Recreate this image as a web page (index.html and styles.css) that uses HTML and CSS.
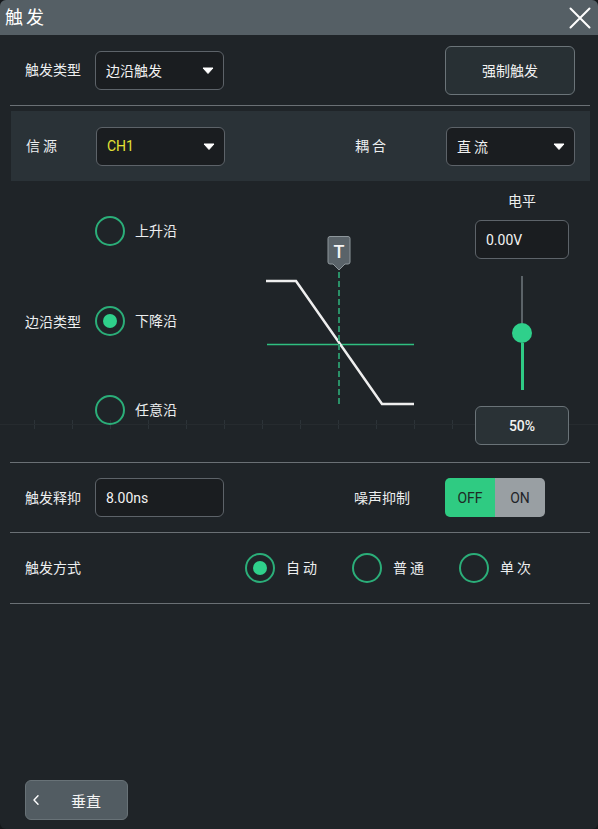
FILE: index.html
```html
<!DOCTYPE html>
<html lang="zh-CN">
<head>
<meta charset="utf-8">
<title>触发</title>
<link rel="stylesheet" href="styles.css">
</head>
<body>
<div class="dialog">
  <header class="titlebar">
    <h1 class="title">触发</h1>
    <button class="close" aria-label="关闭">
      <svg width="22" height="22" viewBox="0 0 22 22"><path d="M1.5 1.5 L20.5 20.5 M20.5 1.5 L1.5 20.5" stroke="#fff" stroke-width="2" stroke-linecap="round"/></svg>
    </button>
  </header>

  <section class="row row-type">
    <span class="label">触发类型</span>
    <div class="select select-type">
      <span>边沿触发</span>
      <svg class="caret" width="12" height="7" viewBox="0 0 12 7"><path d="M1 1 H11 L6 6.5 Z" fill="#fff" stroke="#fff" stroke-width="1" stroke-linejoin="round"/></svg>
    </div>
    <button class="force">强制触发</button>
  </section>
  <div class="divider"></div>

  <section class="panel">
    <span class="label spaced">信源</span>
    <div class="select select-src">
      <span class="ch1">CH1</span>
      <svg class="caret" width="12" height="7" viewBox="0 0 12 7"><path d="M1 1 H11 L6 6.5 Z" fill="#fff" stroke="#fff" stroke-width="1" stroke-linejoin="round"/></svg>
    </div>
    <span class="label spaced couple">耦合</span>
    <div class="select">
      <span class="spaced">直流</span>
      <svg class="caret" width="12" height="7" viewBox="0 0 12 7"><path d="M1 1 H11 L6 6.5 Z" fill="#fff" stroke="#fff" stroke-width="1" stroke-linejoin="round"/></svg>
    </div>
  </section>

  <section class="edge">
    <span class="label edge-label">边沿类型</span>
    <div class="radio-col">
      <div class="radio"><span class="ring"></span><span class="label">上升沿</span></div>
      <div class="radio"><span class="ring on"></span><span class="label">下降沿</span></div>
      <div class="radio"><span class="ring"></span><span class="label">任意沿</span></div>
    </div>
    <svg class="diagram" width="180" height="281" viewBox="0 0 180 281">
      <line x1="17" y1="163.5" x2="164" y2="163.5" stroke="#2fbf80" stroke-width="1.5"/>
      <polyline points="16,100 46,100 132,223 164,223" fill="none" stroke="#eeeeee" stroke-width="2.5"/>
      <line x1="89" y1="91" x2="89" y2="225" stroke="#2a9068" stroke-width="2" stroke-dasharray="6 3"/>
      <path d="M80 55.5 h18 a2 2 0 0 1 2 2 v23.5 a2 2 0 0 1 -2 2 h-3 l-6 6 l-6 -6 h-3 a2 2 0 0 1 -2 -2 v-23.5 a2 2 0 0 1 2 -2 z" fill="#5a6369" stroke="#8e979c" stroke-width="1"/>
      <text x="89" y="77" text-anchor="middle" font-size="18" font-weight="500" fill="#f4f4f4" font-family="Roboto, sans-serif">T</text>
    </svg>
    <div class="level">
      <span class="level-title">电平</span>
      <div class="field level-input">0.00V</div>
      <div class="slider">
        <span class="track track-top"></span>
        <span class="knob"></span>
        <span class="track track-bottom"></span>
      </div>
      <button class="pct">50%</button>
    </div>
  </section>
  <div class="divider"></div>

  <section class="row row-holdoff">
    <span class="label">触发释抑</span>
    <div class="field holdoff">8.00ns</div>
    <span class="label noise">噪声抑制</span>
    <div class="toggle">
      <span class="toggle-off">OFF</span>
      <span class="toggle-on">ON</span>
    </div>
  </section>
  <div class="divider"></div>

  <section class="row row-mode">
    <span class="label">触发方式</span>
    <div class="mode-group">
      <div class="radio radio-mode"><span class="ring on"></span><span class="label spaced">自动</span></div>
      <div class="radio radio-mode"><span class="ring"></span><span class="label spaced">普通</span></div>
      <div class="radio radio-mode"><span class="ring"></span><span class="label spaced">单次</span></div>
    </div>
  </section>
  <div class="divider"></div>

  <footer class="footer">
    <button class="back">
      <svg width="6" height="10" viewBox="0 0 6 10"><path d="M5 0.8 L1 5 L5 9.2" fill="none" stroke="#fff" stroke-width="1.4" stroke-linecap="round" stroke-linejoin="round"/></svg>
      <span class="back-text">垂直</span>
    </button>
  </footer>
</div>
</body>
</html>
```

FILE: styles.css
```css
* {
  box-sizing: border-box;
  margin: 0;
  padding: 0;
}

html,
body {
  width: 598px;
  height: 829px;
  background: #15181b;
  overflow: hidden;
}

body {
  font-family: Roboto, "Noto Sans CJK SC", sans-serif;
  color: #eceeef;
  font-size: 14px;
}

button {
  font-family: inherit;
  color: inherit;
  cursor: pointer;
}

.dialog {
  height: 829px;
  display: flex;
  flex-direction: column;
  background: #1f2428;
  border-radius: 6px;
  overflow: hidden;
}

.titlebar {
  height: 35px;
  flex: none;
  background: #555f65;
  display: flex;
  align-items: center;
  justify-content: space-between;
  padding: 0 7px 0 5px;
}

.title {
  font-size: 18px;
  font-weight: 400;
  letter-spacing: 3px;
  line-height: 1;
  color: #ffffff;
}

.close {
  background: none;
  border: 0;
  width: 22px;
  height: 22px;
  display: flex;
}

.row {
  height: 70px;
  flex: none;
  display: flex;
  align-items: center;
  padding: 0 23px 0 25px;
}

.label {
  font-size: 14px;
  line-height: 20px;
  white-space: nowrap;
  color: #eceeef;
}

.spaced {
  letter-spacing: 3px;
}

.select {
  width: 129px;
  height: 39px;
  flex: none;
  display: flex;
  align-items: center;
  justify-content: space-between;
  padding: 0 9px 0 10px;
  background: #1a1d20;
  border: 1px solid #5d6369;
  border-radius: 6px;
  font-size: 14px;
  color: #f2f2f2;
}

.caret {
  display: block;
}

.select-type {
  margin-left: 14px;
}

.force {
  margin-left: auto;
  width: 130px;
  height: 49px;
  background: #283034;
  border: 1px solid #6b7479;
  border-radius: 6px;
  font-size: 14px;
  color: #f2f2f2;
}

.divider {
  height: 1px;
  flex: none;
  background: #6a7075;
  margin: 0 8px 0 10px;
}

.panel {
  height: 70px;
  flex: none;
  margin: 5px 8px 0 11px;
  background: #2a3237;
  display: flex;
  align-items: center;
  padding: 0 15px;
}

.select-src {
  margin-left: 36px;
}

.ch1 {
  color: #e3e335;
}

.couple {
  margin-left: auto;
  margin-right: 57px;
}

.edge {
  height: 281px;
  flex: none;
  display: flex;
  padding-left: 25px;
  background:
    linear-gradient(#262b2f, #262b2f) 0 243px / 100% 1px no-repeat,
    repeating-linear-gradient(90deg, #2c3338 0 1px, transparent 1px 38px) 34px 239px / 600px 9px no-repeat;
}

.edge-label {
  width: 70px;
  flex: none;
  align-self: center;
}

.radio-col {
  width: 155px;
  flex: none;
  display: flex;
  flex-direction: column;
  padding-top: 35px;
  gap: 59.5px;
}

.radio {
  display: flex;
  align-items: center;
  gap: 10px;
  height: 30px;
}

.ring {
  width: 30px;
  height: 30px;
  flex: none;
  border-radius: 50%;
  border: 2.5px solid #2bae79;
  display: flex;
  align-items: center;
  justify-content: center;
}

.ring.on::after {
  content: "";
  width: 14px;
  height: 14px;
  border-radius: 50%;
  background: #2fd08b;
}

.diagram {
  flex: none;
  display: block;
}

.level {
  width: 94px;
  flex: none;
  margin-left: 45px;
  display: flex;
  flex-direction: column;
  align-items: center;
  padding-top: 10px;
}

.level-title {
  font-size: 14px;
  line-height: 20px;
  margin-bottom: 9px;
}

.field {
  height: 39px;
  display: flex;
  align-items: center;
  padding-left: 10px;
  background: #1a1d20;
  border: 1px solid #5d6369;
  border-radius: 6px;
  font-size: 14px;
  color: #f2f2f2;
}

.level-input {
  width: 94px;
}

.slider {
  height: 147px;
  display: flex;
  flex-direction: column;
  align-items: center;
  padding-top: 17px;
}

.track {
  display: block;
  height: 47px;
}

.track-top {
  width: 2px;
  background: #5b6368;
}

.track-bottom {
  width: 3px;
  background: #2fcb85;
}

.knob {
  width: 20px;
  height: 20px;
  border-radius: 50%;
  background: #2fd08b;
}

.pct {
  width: 94px;
  height: 39px;
  background: #2a3236;
  border: 1px solid #6a7378;
  border-radius: 6px;
  font-size: 14px;
  font-weight: 500;
  color: #f2f2f2;
}

.row-holdoff {
  height: 69px;
  padding-right: 53px;
}

.holdoff {
  width: 129px;
  margin-left: 14px;
}

.noise {
  margin-left: auto;
}

.toggle {
  margin-left: 35px;
  width: 100px;
  height: 39px;
  display: flex;
  border-radius: 5px;
  overflow: hidden;
  font-size: 14px;
}

.toggle-off,
.toggle-on {
  flex: 1;
  display: flex;
  align-items: center;
  justify-content: center;
  color: #1e2a25;
}

.toggle-off {
  background: #2fcb82;
}

.toggle-on {
  background: #999fa3;
  color: #1f2428;
}

.mode-group {
  display: flex;
  gap: 32px;
  margin-left: 164px;
}

.radio-mode {
  gap: 11px;
}

.footer {
  margin-top: auto;
  padding: 0 0 9px 25px;
  flex: none;
}

.back {
  width: 103px;
  height: 40px;
  display: flex;
  align-items: center;
  padding-left: 7px;
  background: #525c62;
  border: 1px solid #687277;
  border-radius: 6px;
}

.back svg {
  display: block;
}

.back-text {
  margin-left: 32px;
  font-size: 15px;
  color: #f4f4f4;
  letter-spacing: 0;
}
```
